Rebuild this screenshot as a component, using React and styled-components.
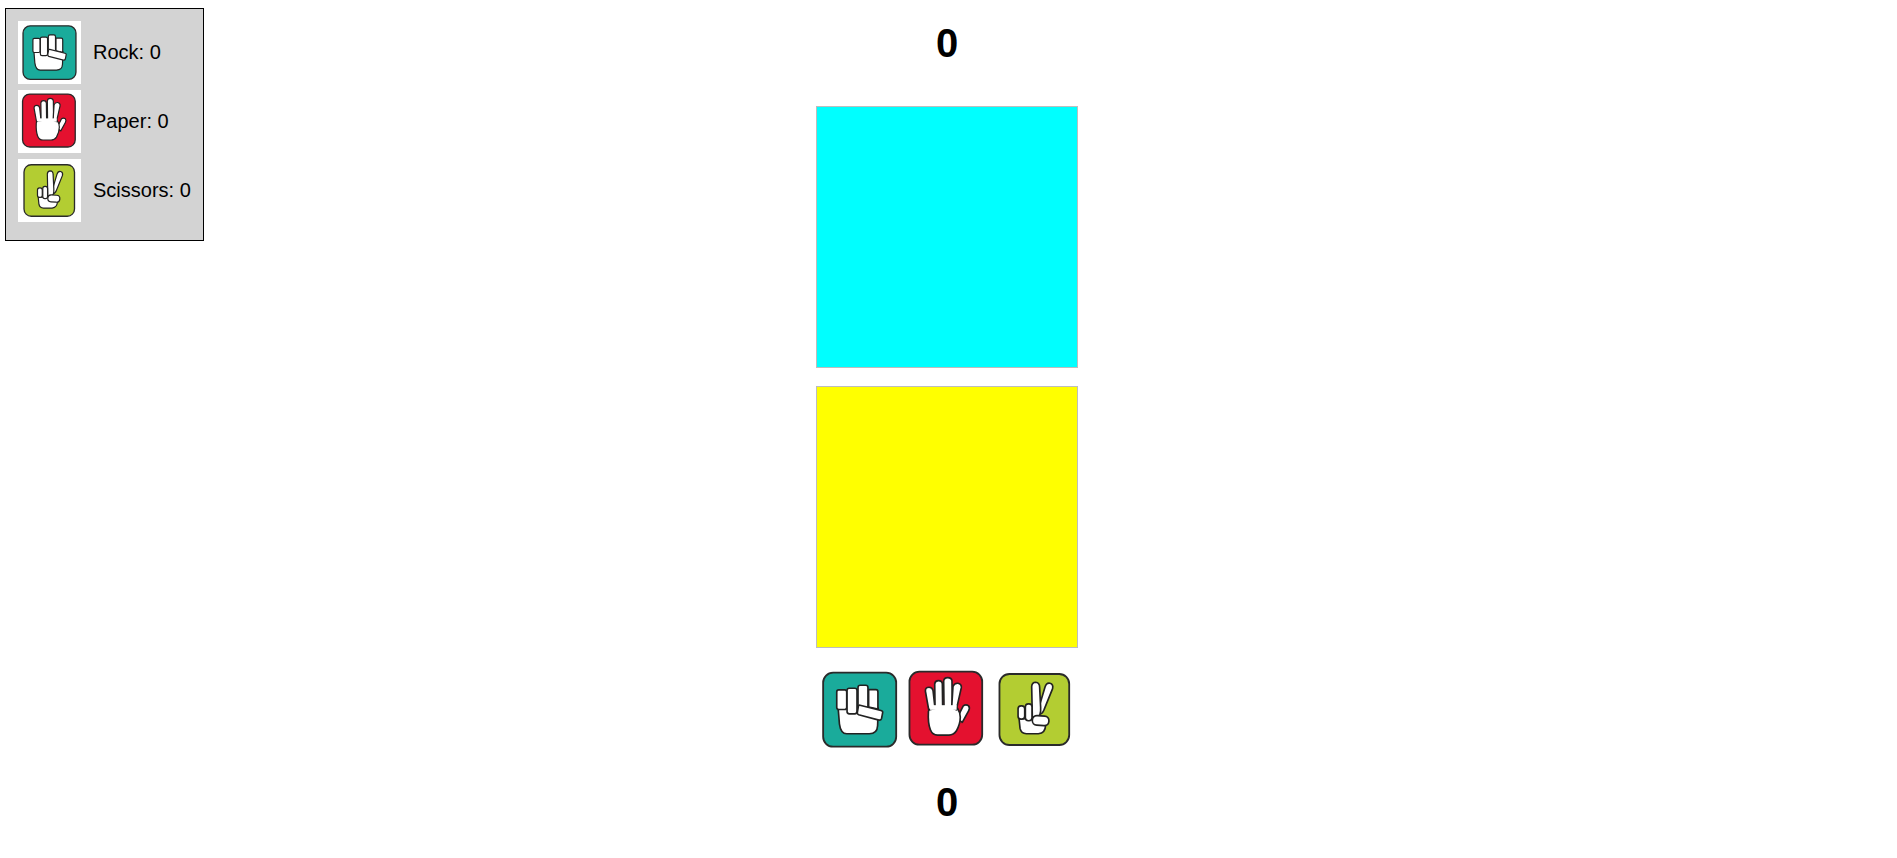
import React from "react";
import styled, { createGlobalStyle } from "styled-components";

const GlobalStyle = createGlobalStyle`
  html, body {
    margin: 0;
    padding: 0;
    background: #fff;
    font-family: "Liberation Sans", Arial, sans-serif;
    color: #000;
  }
`;

const Page = styled.div`
  display: grid;
  grid-template-columns: 816px 262px 1fr;
  align-items: start;
`;

const ScorePanel = styled.aside`
  box-sizing: border-box;
  width: 199px;
  height: 233px;
  margin: 8px 0 0 5px;
  padding: 12px;
  display: flex;
  flex-direction: column;
  gap: 6px;
  background: #d3d3d3;
  border: 1px solid #000;
`;

const ScoreRow = styled.div`
  display: flex;
  align-items: center;
  gap: 12px;
  font-size: 20px;
  white-space: nowrap;
`;

const Thumb = styled.div`
  width: 63px;
  height: 63px;
  flex: none;
  background: #fff;
  svg {
    display: block;
    width: 100%;
    height: 100%;
  }
`;

const Game = styled.main`
  display: flex;
  flex-direction: column;
`;

const Score = styled.div`
  font-size: 40px;
  font-weight: 700;
  line-height: 46px;
  text-align: center;
  margin: ${(p) => p.$margin};
`;

const Board = styled.div`
  box-sizing: border-box;
  height: 262px;
  background: ${(p) => p.$color};
  border: 1px solid #bdbdbd;
  & + & {
    margin-top: 18px;
  }
`;

const Choices = styled.div`
  display: flex;
  margin-top: 18px;
`;

const Choice = styled.button`
  flex: 1 1 0;
  height: 87px;
  padding: 0;
  border: 0;
  background: none;
  svg {
    display: block;
    width: 100%;
    height: 100%;
  }
`;

const line = { stroke: "#222", strokeWidth: 5, fill: "#fff", strokeLinejoin: "round" };

const RockIcon = () => (
  <svg viewBox="48 108 262 262">
    <rect x="69" y="128" width="220" height="223" rx="30" fill="#1aab9b" stroke="#2a2a2a" strokeWidth="5.5" />
    <path d="M114 232 L118 282 Q122 312 140 312 L208 312 Q232 312 233 288 L235 235 Z" {...line} />
    <rect x="110" y="180" width="30" height="59" rx="6" {...line} />
    <rect x="141" y="175" width="30" height="77" rx="7" {...line} />
    <rect x="174" y="166" width="30" height="72" rx="7" {...line} />
    <path d="M206 179 L228 179 Q234 179 234 186 L234 238 L206 232 Z" {...line} />
    <path d="M180 226 L243 242 Q250 244 248 250 L245 266 Q243 272 237 271 L176 255 Q171 253 172 248 L175 230 Q176 225 180 226 Z" {...line} />
  </svg>
);

const PaperIcon = () => (
  <svg viewBox="310 108 262 262">
    <rect x="329" y="125" width="219" height="220" rx="30" fill="#e4112f" stroke="#2a2a2a" strokeWidth="5.5" />
    <path d="M491 228 Q499 222 507 228 Q512 234 507 243 L488 278 L472 266 Z" {...line} />
    <path d="M386 245 Q388 226 412 225 L452 225 Q480 228 482 262 Q482 282 470 304 Q462 316 448 316 L414 316 Q398 316 392 300 Q384 280 386 245 Z" {...line} />
    <path d="M377 184 Q376 172 388 172 Q398 172 400 182 L406 236 L387 240 Z" {...line} />
    <path d="M405 162 Q406 152 416 152 Q428 152 428 163 L429 234 L406 234 Z" {...line} />
    <path d="M432 153 Q433 143 444 143 Q456 143 457 153 L458 234 L433 234 Z" {...line} />
    <path d="M460 170 Q464 159 475 160 Q487 163 485 174 L470 240 L456 234 Z" {...line} />
    <rect x="391" y="226" width="80" height="14" fill="#fff" />
  </svg>
);

const ScissorsIcon = () => (
  <svg viewBox="572 108 262 262">
    <rect x="597" y="132" width="210" height="214" rx="30" fill="#b3cd32" stroke="#2a2a2a" strokeWidth="5.5" />
    <path d="M734 172 Q738 158 749 160 Q760 163 757 176 L732 238 Q726 254 716 252 L716 232 Z" {...line} />
    <path d="M694 170 Q695 157 706 157 Q718 158 718 172 L721 232 Q723 262 708 262 L696 262 Z" {...line} />
    <path d="M656 266 L659 296 Q662 312 678 312 L714 312 Q736 310 736 284 L736 270 Z" {...line} />
    <rect x="653" y="228" width="20" height="40" rx="9" {...line} />
    <rect x="675" y="222" width="20" height="51" rx="9" {...line} />
    <rect x="696" y="258" width="50" height="29" rx="14" transform="rotate(4 721 272)" {...line} />
  </svg>
);

const moves = [
  { name: "Rock", count: 0, Icon: RockIcon },
  { name: "Paper", count: 0, Icon: PaperIcon },
  { name: "Scissors", count: 0, Icon: ScissorsIcon },
];

export default function App() {
  return (
    <Page>
      <GlobalStyle />
      <ScorePanel>
        {moves.map(({ name, count, Icon }) => (
          <ScoreRow key={name}>
            <Thumb>
              <Icon />
            </Thumb>
            {name}: {count}
          </ScoreRow>
        ))}
      </ScorePanel>
      <Game>
        <Score $margin="20px 0 40px">0</Score>
        <Board $color="#00ffff" />
        <Board $color="#ffff00" />
        <Choices>
          {moves.map(({ name, Icon }) => (
            <Choice key={name} aria-label={name}>
              <Icon />
            </Choice>
          ))}
        </Choices>
        <Score $margin="26px 0 0">0</Score>
      </Game>
    </Page>
  );
}
